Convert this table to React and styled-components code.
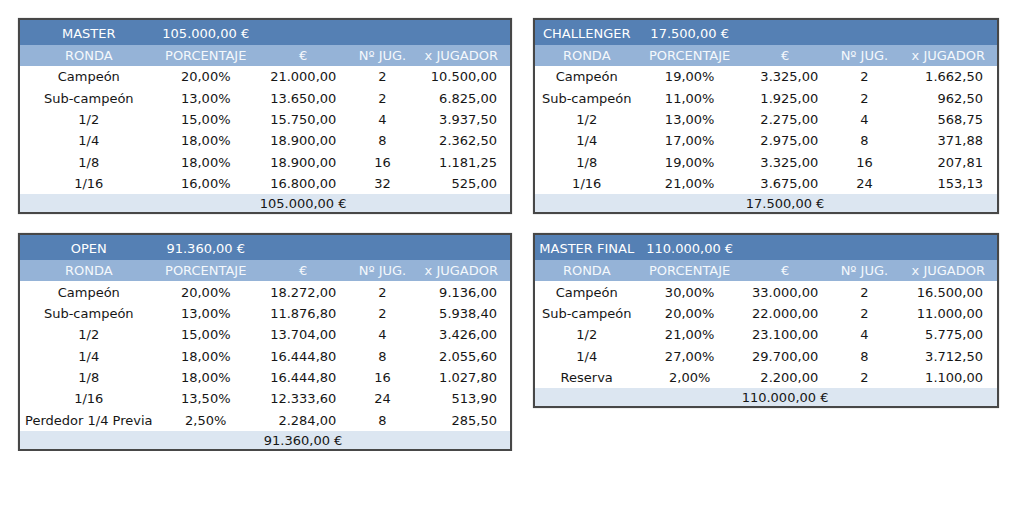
import styled, { createGlobalStyle } from "styled-components";

const GlobalStyle = createGlobalStyle`
  html, body {
    margin: 0;
    padding: 0;
    background: #ffffff;
  }
  body {
    font-family: "DejaVu Sans", Verdana, sans-serif;
  }
`;

const Page = styled.div`
  display: grid;
  grid-template-columns: 494px 466px;
  column-gap: 21px;
  row-gap: 19px;
  align-items: start;
  padding: 18px 0 0 18px;
`;

const Table = styled.table`
  width: 100%;
  border-collapse: collapse;
  border: 2px solid #474747;
  box-shadow: 0 0 1px rgba(0, 0, 0, 0.4);
  font-size: 13px;
  color: #161616;
  table-layout: fixed;
`;

const TitleRow = styled.tr`
  background: #5580b4;
  color: #ffffff;
  height: 26px;

  td {
    text-align: center;
    white-space: nowrap;
    padding: 2px 0 0;
  }
`;

const HeadRow = styled.tr`
  background: #95b3d7;
  color: #f4f8fc;
  height: 21px;

  th {
    font-weight: normal;
    text-align: center;
    white-space: nowrap;
    padding: 0;
  }
`;

const Row = styled.tr`
  height: 21.4px;
  background: #ffffff;
`;

const Cell = styled.td`
  padding: 0 ${(p) => p.$pad || 0}px 0 0;
  text-align: ${(p) => p.$align || "center"};
  white-space: nowrap;
`;

const FootRow = styled.tr`
  background: #dce6f1;
  height: 19px;

  td {
    text-align: center;
    white-space: nowrap;
    padding: 0;
  }
`;

const layouts = {
  wide: { cols: [138, 96, 98, 60, 98], pad: [16, 13] },
  narrow: { cols: [104, 102, 88, 70, 98], pad: [11, 14] },
};

const tables = [
  {
    name: "MASTER",
    total: "105.000,00 €",
    layout: "wide",
    rows: [
      ["Campeón", "20,00%", "21.000,00", "2", "10.500,00"],
      ["Sub-campeón", "13,00%", "13.650,00", "2", "6.825,00"],
      ["1/2", "15,00%", "15.750,00", "4", "3.937,50"],
      ["1/4", "18,00%", "18.900,00", "8", "2.362,50"],
      ["1/8", "18,00%", "18.900,00", "16", "1.181,25"],
      ["1/16", "16,00%", "16.800,00", "32", "525,00"],
    ],
  },
  {
    name: "CHALLENGER",
    total: "17.500,00 €",
    layout: "narrow",
    rows: [
      ["Campeón", "19,00%", "3.325,00", "2", "1.662,50"],
      ["Sub-campeón", "11,00%", "1.925,00", "2", "962,50"],
      ["1/2", "13,00%", "2.275,00", "4", "568,75"],
      ["1/4", "17,00%", "2.975,00", "8", "371,88"],
      ["1/8", "19,00%", "3.325,00", "16", "207,81"],
      ["1/16", "21,00%", "3.675,00", "24", "153,13"],
    ],
  },
  {
    name: "OPEN",
    total: "91.360,00 €",
    layout: "wide",
    rows: [
      ["Campeón", "20,00%", "18.272,00", "2", "9.136,00"],
      ["Sub-campeón", "13,00%", "11.876,80", "2", "5.938,40"],
      ["1/2", "15,00%", "13.704,00", "4", "3.426,00"],
      ["1/4", "18,00%", "16.444,80", "8", "2.055,60"],
      ["1/8", "18,00%", "16.444,80", "16", "1.027,80"],
      ["1/16", "13,50%", "12.333,60", "24", "513,90"],
      ["Perdedor 1/4 Previa", "2,50%", "2.284,00", "8", "285,50"],
    ],
  },
  {
    name: "MASTER FINAL",
    total: "110.000,00 €",
    layout: "narrow",
    rows: [
      ["Campeón", "30,00%", "33.000,00", "2", "16.500,00"],
      ["Sub-campeón", "20,00%", "22.000,00", "2", "11.000,00"],
      ["1/2", "21,00%", "23.100,00", "4", "5.775,00"],
      ["1/4", "27,00%", "29.700,00", "8", "3.712,50"],
      ["Reserva", "2,00%", "2.200,00", "2", "1.100,00"],
    ],
  },
];

const headers = ["RONDA", "PORCENTAJE", "€", "Nº JUG.", "x JUGADOR"];

const PrizeTable = ({ name, total, layout, rows }) => {
  const { cols, pad } = layouts[layout];
  return (
    <Table>
      <colgroup>
        {cols.map((w, i) => (
          <col key={i} style={{ width: w }} />
        ))}
      </colgroup>
      <tbody>
        <TitleRow>
          <td>{name}</td>
          <td>{total}</td>
          <td colSpan={3}></td>
        </TitleRow>
        <HeadRow>
          {headers.map((h) => (
            <th key={h}>{h}</th>
          ))}
        </HeadRow>
        {rows.map((r) => (
          <Row key={r[0]}>
            <Cell>{r[0]}</Cell>
            <Cell>{r[1]}</Cell>
            <Cell $align="right" $pad={pad[0]}>
              {r[2]}
            </Cell>
            <Cell>{r[3]}</Cell>
            <Cell $align="right" $pad={pad[1]}>
              {r[4]}
            </Cell>
          </Row>
        ))}
        <FootRow>
          <td colSpan={2}></td>
          <td>{total}</td>
          <td colSpan={2}></td>
        </FootRow>
      </tbody>
    </Table>
  );
};

const App = () => {
  return (
    <>
      <GlobalStyle />
      <Page>
        {tables.map((t) => (
          <PrizeTable key={t.name} {...t} />
        ))}
      </Page>
    </>
  );
};

export default App;
